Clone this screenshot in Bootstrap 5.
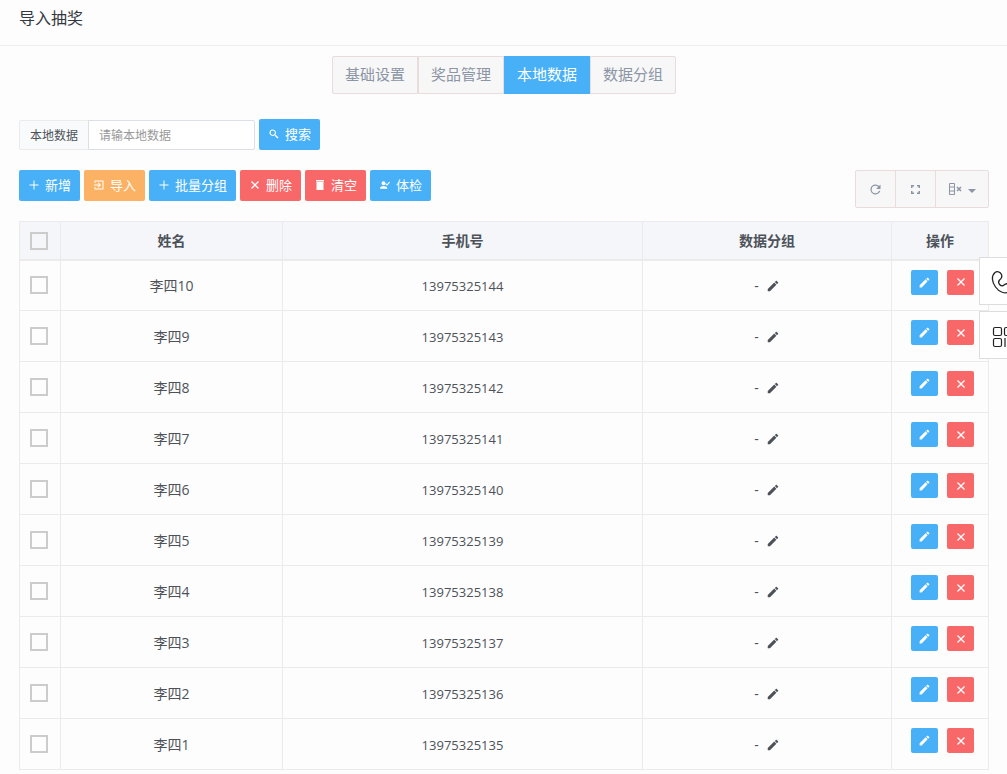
<!DOCTYPE html>
<html lang="zh-CN">
<head>
<meta charset="utf-8">
<meta name="viewport" content="width=device-width, initial-scale=1">
<title>导入抽奖</title>
<link href="https://cdn.jsdelivr.net/npm/bootstrap@5.3.0/dist/css/bootstrap.min.css" rel="stylesheet">
<style>
  :root { --blue: #48b0f7; --red: #f96868; --orange: #fcb264; --line: #ebebeb; --ink: #4d5259; }
  body { font-family: "Open Sans", "Noto Sans CJK SC", sans-serif; font-size: 14px; line-height: 22px; color: var(--ink); background: #fdfdfd; }
  svg { display: block; fill: currentColor; }
  .page-head { height: 46px; padding: 6px 19px 0; border-bottom: 1px solid #f0f0f0; }
  .page-head h1 { font-size: 16px; line-height: 24px; font-weight: 400; color: #33383e; }
  .page-body { padding: 10px 18px 4px 19px; }
  .btn { --bs-btn-border-radius: 2px; --bs-btn-line-height: 22px; }
  .btn-plain { --bs-btn-color: #8b95a5; --bs-btn-bg: #f7f7f7; --bs-btn-border-color: #e8dcdd; --bs-btn-hover-bg: #f0f0f0; --bs-btn-hover-color: #8b95a5; --bs-btn-hover-border-color: #e8dcdd; height: 38px; }
  .tabs .btn { --bs-btn-font-size: 15px; --bs-btn-padding-x: 12px; --bs-btn-active-bg: var(--blue); --bs-btn-active-border-color: var(--blue); --bs-btn-active-color: #fff; }
  .btn-act { --bs-btn-color: #fff; --bs-btn-hover-color: #fff; --bs-btn-border-width: 0; --bs-btn-font-size: 13px; height: 31px; padding: 4px 9px 5px 10px; gap: 6px; }
  .c-blue { --bs-btn-bg: var(--blue); --bs-btn-hover-bg: #3aa3ec; }
  .c-red { --bs-btn-bg: var(--red); --bs-btn-hover-bg: #ee5757; }
  .c-orange { --bs-btn-bg: var(--orange); --bs-btn-hover-bg: #f5a44f; }
  .query { margin-top: 25px; }
  .search { width: 236px; height: 30px; }
  .search .input-group-text, .search .form-control { font-size: 12px; line-height: 18px; padding: 6px 10px 4px; border-radius: 2px; border-color: #ebebeb; color: var(--ink); }
  .search .input-group-text { background: #f9fafb; }
  .search .form-control { border-color: #dcdfe6; }
  .search .form-control::placeholder { color: #999; }
  .actions { margin: 20px 0 13px; }
  .tools .btn { width: 41px; padding: 0; }
  .tools .btn:last-child { width: 54px; gap: 6px; }
  .data-grid { table-layout: fixed; width: 100%; border-collapse: collapse; text-align: center; }
  .data-grid th, .data-grid td { border: 1px solid var(--line); }
  .data-grid th { height: 38px; background: #f4f6fa; border-bottom: 2px solid #ebebeb; font-weight: 700; padding: 2px 0 0; }
  .data-grid td { height: 51px; padding: 2px 0 0; }
  .data-grid .tick-cell { padding: 0; }
  .col-tick { width: 41px; } .col-name { width: 222px; } .col-group { width: 249px; } .col-ops { width: 97px; }
  .tick { appearance: none; display: block; width: 18px; height: 18px; margin: 0 10px; border: 2px solid #ccc; background: transparent; }
  .tick:checked { background: var(--blue); border-color: var(--blue); }
  .digits { font-size: 13px; }
  .group-cell { gap: 7px; }
  .data-grid .ops { vertical-align: top; padding: 9px 0 0 5px; }
  .ops-pair { gap: 9px; }
  .btn-mini { width: 27px; height: 25px; padding: 0; border: 0; color: #fff; }
  .link-edit { color: var(--ink); background: none; border: 0; padding: 0; }
  .side-dock { position: fixed; top: 257px; right: -20px; z-index: 10; gap: 6px; }
  .side-dock button { width: 48px; height: 48px; background: #fff; border: 1px solid #ddd; padding: 4px 0 0 11px; color: #222; }
  .side-dock svg { fill: none; stroke: currentColor; }
  @media (max-width: 800px) { .col-name, .col-group { width: 24%; } }
</style>
</head>
<body>
<svg width="0" height="0" class="position-absolute" aria-hidden="true">
  <symbol id="i-plus" viewBox="2 2 20 20"><path d="M11 3h2v8h8v2h-8v8h-2v-8H3v-2h8z"/></symbol>
  <symbol id="i-x" viewBox="2 2 20 20"><path d="M4 5.800 5.800 4 12 10.200 18.200 4 20 5.800 13.800 12 20 18.200 18.200 20 12 13.800 5.800 20 4 18.200 10.200 12z"/></symbol>
  <symbol id="i-search" viewBox="2 2 20 20"><path d="M9.500 3a6.500 6.500 0 0 1 5.200 10.400l.3.6h.8l5.200 5-2 2-5-5.200v-.8l-.6-.3A6.500 6.500 0 1 1 9.500 3m0 2.200a4.300 4.300 0 1 0 0 8.600 4.300 4.300 0 0 0 0-8.600z"/></symbol>
  <symbol id="i-import" viewBox="2 2 20 20"><path d="M3 3h18v18H3v-5h2v3h14V5H5v3H3zM11 7l5 5-5 5-1.500-1.500L12 13H2v-2h10L9.500 8.500z"/></symbol>
  <symbol id="i-trash" viewBox="2 2 20 20"><path d="M4 2h16v3H4zM5 6h14v16H5z"/></symbol>
  <symbol id="i-check" viewBox="1 2 23 21"><path d="M9 4a4.500 4.500 0 1 1 0 9 4.500 4.500 0 0 1 0-9M1 21c0-4 3-6 8-6s9 2 9 6zM17 14l-4-4 1.800-1.800L17 10.500 22.200 5 24 6.800z"/></symbol>
  <symbol id="i-pen" viewBox="0 0 24 24"><path d="M20.700 7c.4-.4.4-1 0-1.400l-2.300-2.300c-.4-.4-1-.4-1.400 0l-1.900 1.900 3.700 3.700M3 17.200V21h3.800L17.800 9.900l-3.700-3.700z"/></symbol>
  <symbol id="i-reload" viewBox="0 0 24 24"><path d="M17.700 6.300A8 8 0 1 0 19.700 14h-2.100A6 6 0 1 1 12 6c1.700 0 3.100.7 4.200 1.800L13 11h7V4z"/></symbol>
  <symbol id="i-full" viewBox="1 1 22 22"><path d="M3 3h6v3H6v3H3zM15 3h6v6h-3V6h-3zM3 15h3v3h3v3H3zM18 15h3v6h-6v-3h3z"/></symbol>
</svg>

<header class="page-head"><h1 class="m-0">导入抽奖</h1></header>

<main class="page-body">
  <nav class="d-flex justify-content-center tabs" aria-label="导入抽奖">
    <a href="#base" class="btn btn-plain rounded-end-0">基础设置</a>
    <a href="#prize" class="btn btn-plain rounded-0">奖品管理</a>
    <a href="#data" class="btn btn-plain rounded-0 active" aria-current="page">本地数据</a>
    <a href="#group" class="btn btn-plain rounded-start-0">数据分组</a>
  </nav>

  <form class="d-flex align-items-end gap-1 query">
    <div class="input-group flex-nowrap search">
      <label class="input-group-text" for="keyword">本地数据</label>
      <input class="form-control" id="keyword" type="text" placeholder="请输本地数据">
    </div>
    <button type="button" class="btn btn-act c-blue d-flex align-items-center"><svg width="10" height="10"><use href="#i-search"/></svg>搜索</button>
  </form>

  <div class="d-flex flex-wrap justify-content-between actions">
    <div class="d-flex flex-wrap gap-1">
      <button type="button" class="btn btn-act c-blue d-flex align-items-center"><svg width="10" height="10"><use href="#i-plus"/></svg>新增</button>
      <button type="button" class="btn btn-act c-orange d-flex align-items-center"><svg width="10" height="10"><use href="#i-import"/></svg>导入</button>
      <button type="button" class="btn btn-act c-blue d-flex align-items-center"><svg width="10" height="10"><use href="#i-plus"/></svg>批量分组</button>
      <button type="button" class="btn btn-act c-red d-flex align-items-center"><svg width="10" height="10"><use href="#i-x"/></svg>删除</button>
      <button type="button" class="btn btn-act c-red d-flex align-items-center"><svg width="10" height="10"><use href="#i-trash"/></svg>清空</button>
      <button type="button" class="btn btn-act c-blue d-flex align-items-center"><svg width="10" height="10"><use href="#i-check"/></svg>体检</button>
    </div>
    <div class="btn-group tools">
      <button type="button" class="btn btn-plain d-flex align-items-center justify-content-center flex-grow-0" aria-label="刷新"><svg width="15" height="15"><use href="#i-reload"/></svg></button>
      <button type="button" class="btn btn-plain d-flex align-items-center justify-content-center flex-grow-0" aria-label="全屏"><svg width="11" height="11"><use href="#i-full"/></svg></button>
      <button type="button" class="btn btn-plain d-flex align-items-center justify-content-center flex-grow-0" aria-label="列">
        <svg width="14" height="12" viewBox="0 0 14 12" stroke="currentColor"><path fill="none" d="M1.500 .5h5v11h-5zM1.500 4h5M1.500 8h5"/><path fill="none" stroke-width="1.500" d="M9 4l4 4M13 4l-4 4"/></svg>
        <svg width="8" height="8" viewBox="0 0 8 8"><path d="M0 4h8L4 8z"/></svg>
      </button>
    </div>
  </div>

  <table class="data-grid">
    <colgroup><col class="col-tick"><col class="col-name"><col><col class="col-group"><col class="col-ops"></colgroup>
    <thead>
      <tr><th><input type="checkbox" class="tick" aria-label="全选"></th><th>姓名</th><th>手机号</th><th>数据分组</th><th>操作</th></tr>
    </thead>
    <tbody id="rows"></tbody>
  </table>
</main>

<aside class="side-dock d-flex flex-column">
  <button type="button" aria-label="电话"><svg width="26" height="26" viewBox="0 0 26 26" stroke-width="1.300"><path d="M4 2.500C6 1 9 1.500 10.500 4.500c1 2.500 0 4-2 5.500-1.500 1.500-1 3 0 4.500 1.500 1.500 3 2 4.500.5 2-2 4-1.500 6 0 3 2 2 5 0 6.500C14 24.500 8 22 4.500 17 1 12 0 6 4 2.500z"/></svg></button>
  <button type="button" aria-label="二维码"><svg width="26" height="22" viewBox="0 0 26 22" stroke-width="1.200"><rect x="2.500" y="1.500" width="8" height="8" rx="1.500"/><rect x="13.500" y="1.500" width="8" height="8" rx="1.500"/><rect x="2.500" y="12.500" width="8" height="8" rx="1.500"/><path d="M14 12v9M17 12v5M20 12v9"/></svg></button>
</aside>

<script src="https://cdn.jsdelivr.net/npm/bootstrap@5.3.0/dist/js/bootstrap.bundle.min.js"></script>
<script>
  const icon = (name, size) => `<svg width="${size}" height="${size}"><use href="#i-${name}"/></svg>`;
  let html = '';
  for (let n = 10; n >= 1; n--) {
    html += `<tr>
      <td class="tick-cell"><input type="checkbox" class="tick" aria-label="选择李四${n}"></td>
      <td>李四${n}</td>
      <td class="digits">${13975325134 + n}</td>
      <td><div class="d-flex align-items-center justify-content-center group-cell">- <button type="button" class="link-edit" aria-label="修改分组">${icon('pen', 14)}</button></div></td>
      <td class="ops"><div class="d-flex justify-content-center ops-pair">
        <button type="button" class="btn btn-mini c-blue d-flex align-items-center justify-content-center" aria-label="编辑">${icon('pen', 13)}</button>
        <button type="button" class="btn btn-mini c-red d-flex align-items-center justify-content-center" aria-label="删除">${icon('x', 10)}</button>
      </div></td></tr>`;
  }
  document.getElementById('rows').innerHTML = html;
</script>
</body>
</html>
